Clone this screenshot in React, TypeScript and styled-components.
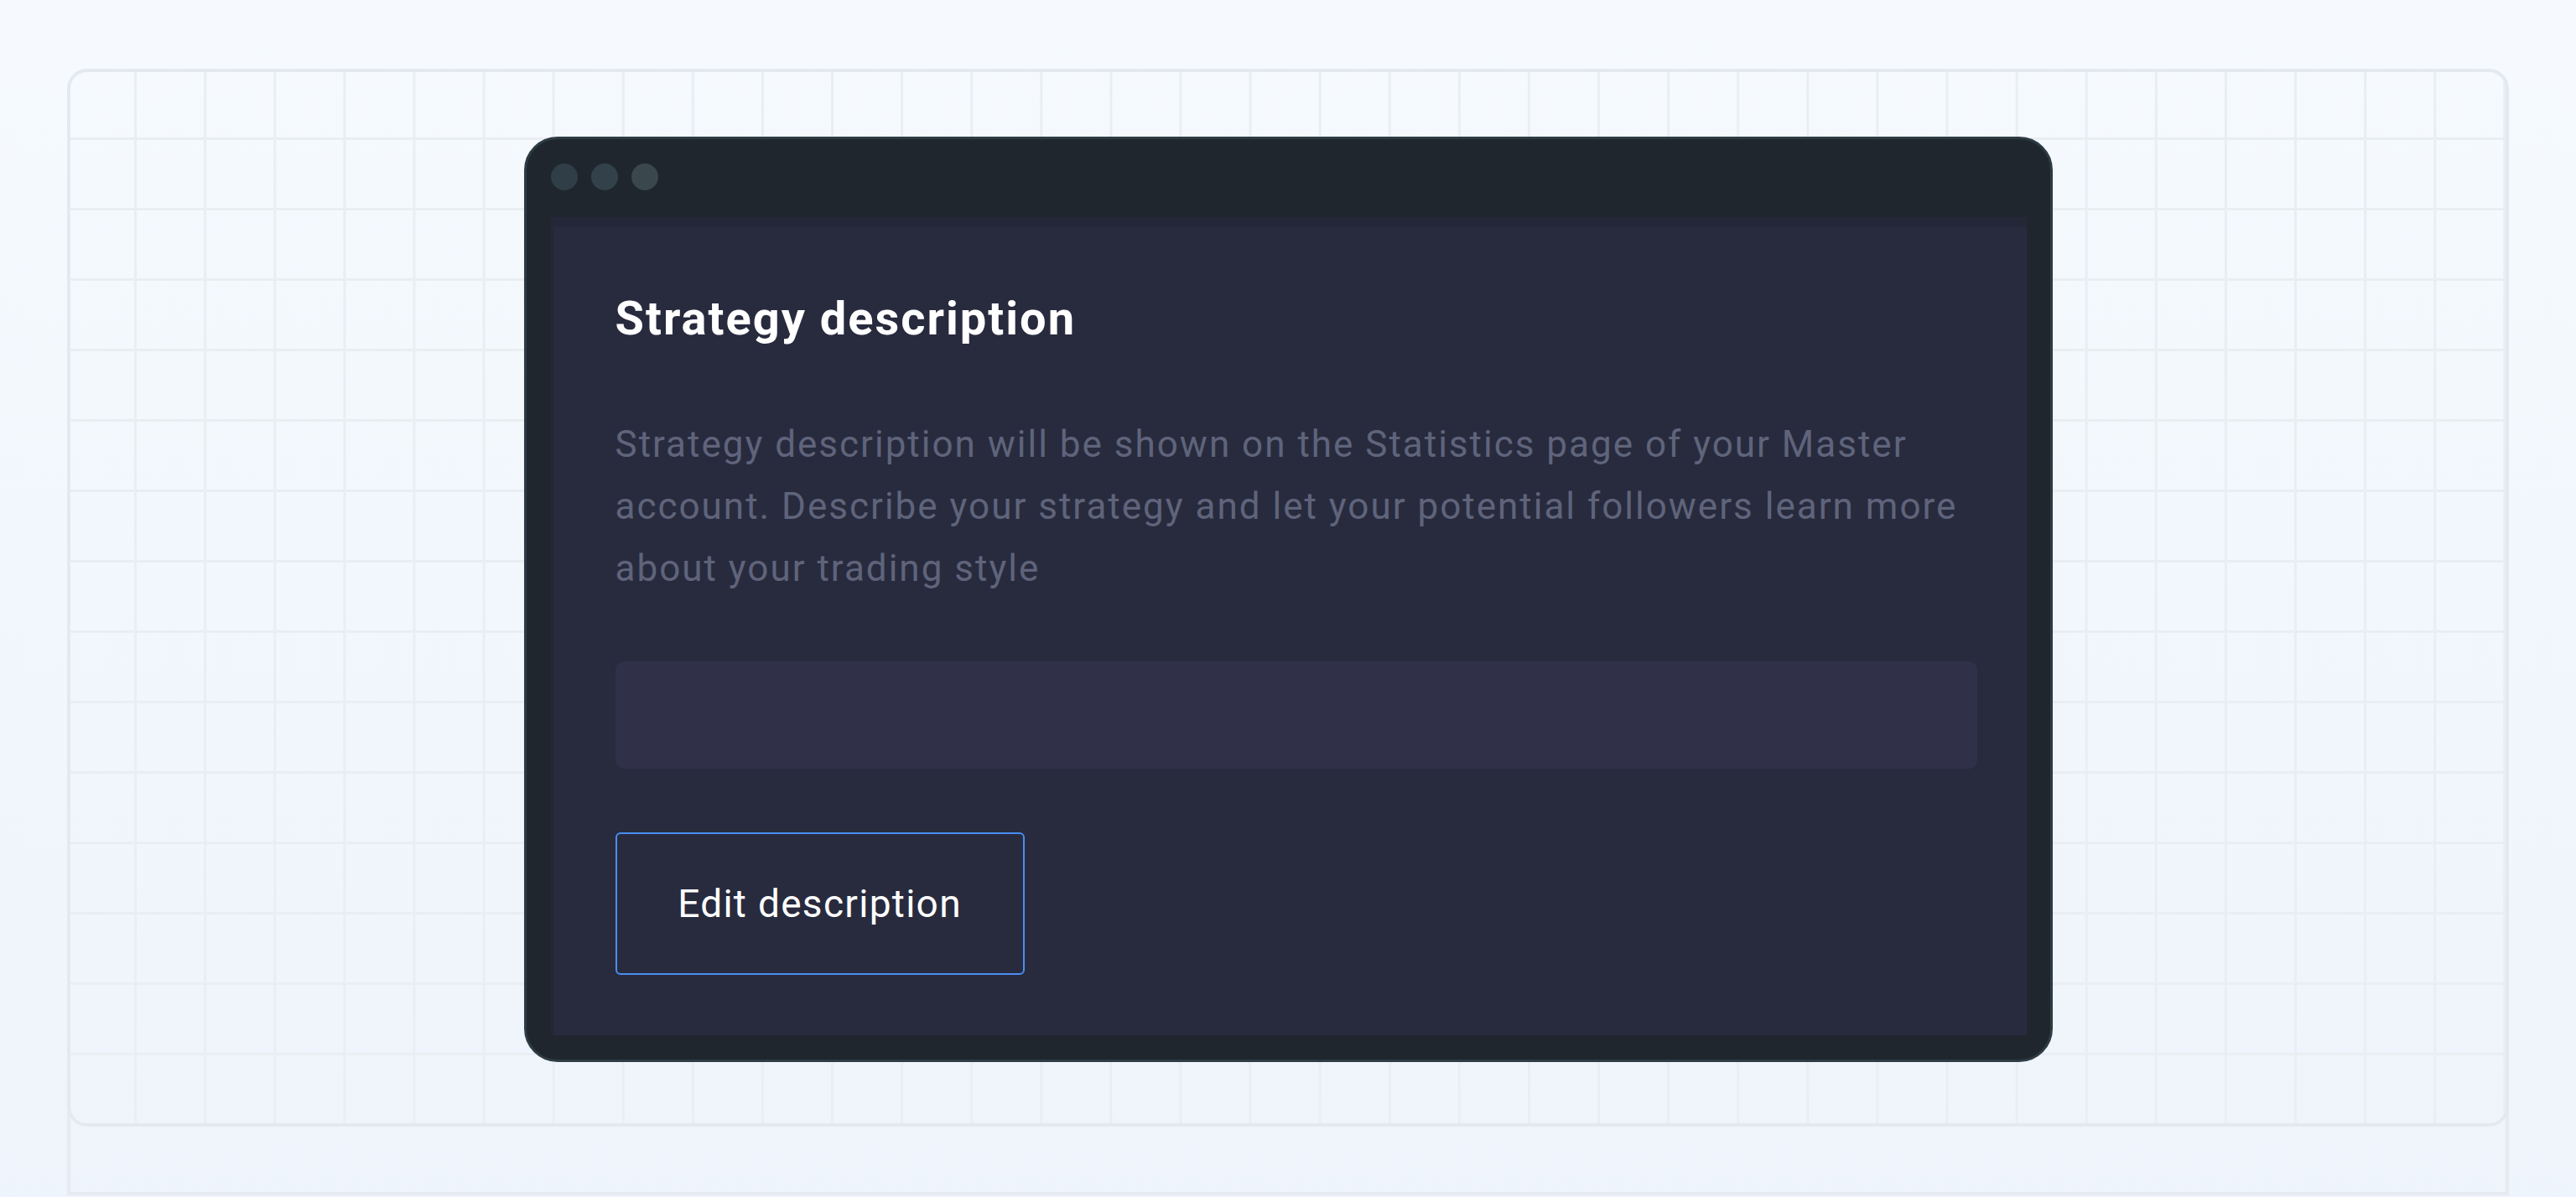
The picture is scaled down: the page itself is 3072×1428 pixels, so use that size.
import React from 'react';
import styled, { createGlobalStyle } from 'styled-components';

const GlobalStyle = createGlobalStyle`
  html, body {
    margin: 0;
    padding: 0;
  }
  body {
    min-height: 1428px;
    background: linear-gradient(180deg, #f6fafe 0%, #eef4fb 100%);
    font-family: Roboto, "Liberation Sans", Arial, sans-serif;
    overflow: hidden;
  }
`;

const Page = styled.div`
  padding: 82px 80px 0 80px;
`;

const Frame = styled.div`
  position: relative;
  z-index: 1;
  height: 1262px;
  box-sizing: border-box;
  border: 4px solid #e4e9ef;
  border-radius: 24px;
  padding-top: 77px;
  display: flex;
  justify-content: center;
  align-items: flex-start;
  background-image:
    linear-gradient(90deg, #e9eef3 3px, transparent 3px),
    linear-gradient(180deg, #e9eef3 3px, transparent 3px);
  background-size: 83.1px 84px;
  background-position: -7px -6px;
`;

const NextRow = styled.div`
  height: 106px;
  margin-top: -24px;
  box-sizing: border-box;
  border: 4px solid #e6ebf1;
  border-top: none;
`;

const Card = styled.div`
  width: 1823px;
  box-sizing: border-box;
  background: #1f262d;
  border: 3px solid #2e3b45;
  border-radius: 40px;
  padding: 0 28px 29px 29px;
  display: flex;
  flex-direction: column;
`;

const TitleBar = styled.div`
  height: 93px;
  display: flex;
  align-items: center;
  gap: 16px;
  padding-bottom: 3px;
  box-sizing: border-box;
`;

const Dot = styled.span<{ $tone: string }>`
  width: 32px;
  height: 32px;
  border-radius: 50%;
  background: ${(p) => p.$tone};
`;

const Panel = styled.div`
  background: #282b3e;
  box-shadow: inset 3px 12px 0 #242738;
  padding: 88px 59px 72px 77px;
  display: flex;
  flex-direction: column;
  align-items: flex-start;
`;

const Title = styled.h2`
  margin: 0;
  font-size: 56px;
  line-height: 67px;
  font-weight: 700;
  color: #ffffff;
  letter-spacing: 2px;
`;

const Description = styled.p`
  margin: 79px 0 0 0;
  font-size: 44px;
  line-height: 74px;
  color: #5f647b;
  letter-spacing: 2px;
`;

const TextArea = styled.div`
  align-self: stretch;
  margin-top: 74px;
  height: 128px;
  border-radius: 10px;
  background: #303149;
`;

const EditButton = styled.button`
  margin-top: 76px;
  width: 488px;
  height: 170px;
  box-sizing: border-box;
  background: transparent;
  border: 2px solid #4a8ef2;
  border-radius: 6px;
  color: #ffffff;
  font-family: Roboto, "Liberation Sans", Arial, sans-serif;
  font-size: 46px;
  font-weight: 400;
  letter-spacing: 1.3px;
  cursor: pointer;
`;

export default function App() {
  return (
    <>
      <GlobalStyle />
      <Page>
        <Frame>
          <Card>
            <TitleBar>
              <Dot $tone="#2f3e47" />
              <Dot $tone="#33424a" />
              <Dot $tone="#3a474c" />
            </TitleBar>
            <Panel>
              <Title>Strategy description</Title>
              <Description>
                Strategy description will be shown on the Statistics page of your Master
                account. Describe your strategy and let your potential followers learn more
                about your trading style
              </Description>
              <TextArea />
              <EditButton>Edit description</EditButton>
            </Panel>
          </Card>
        </Frame>
        <NextRow />
      </Page>
    </>
  );
}
